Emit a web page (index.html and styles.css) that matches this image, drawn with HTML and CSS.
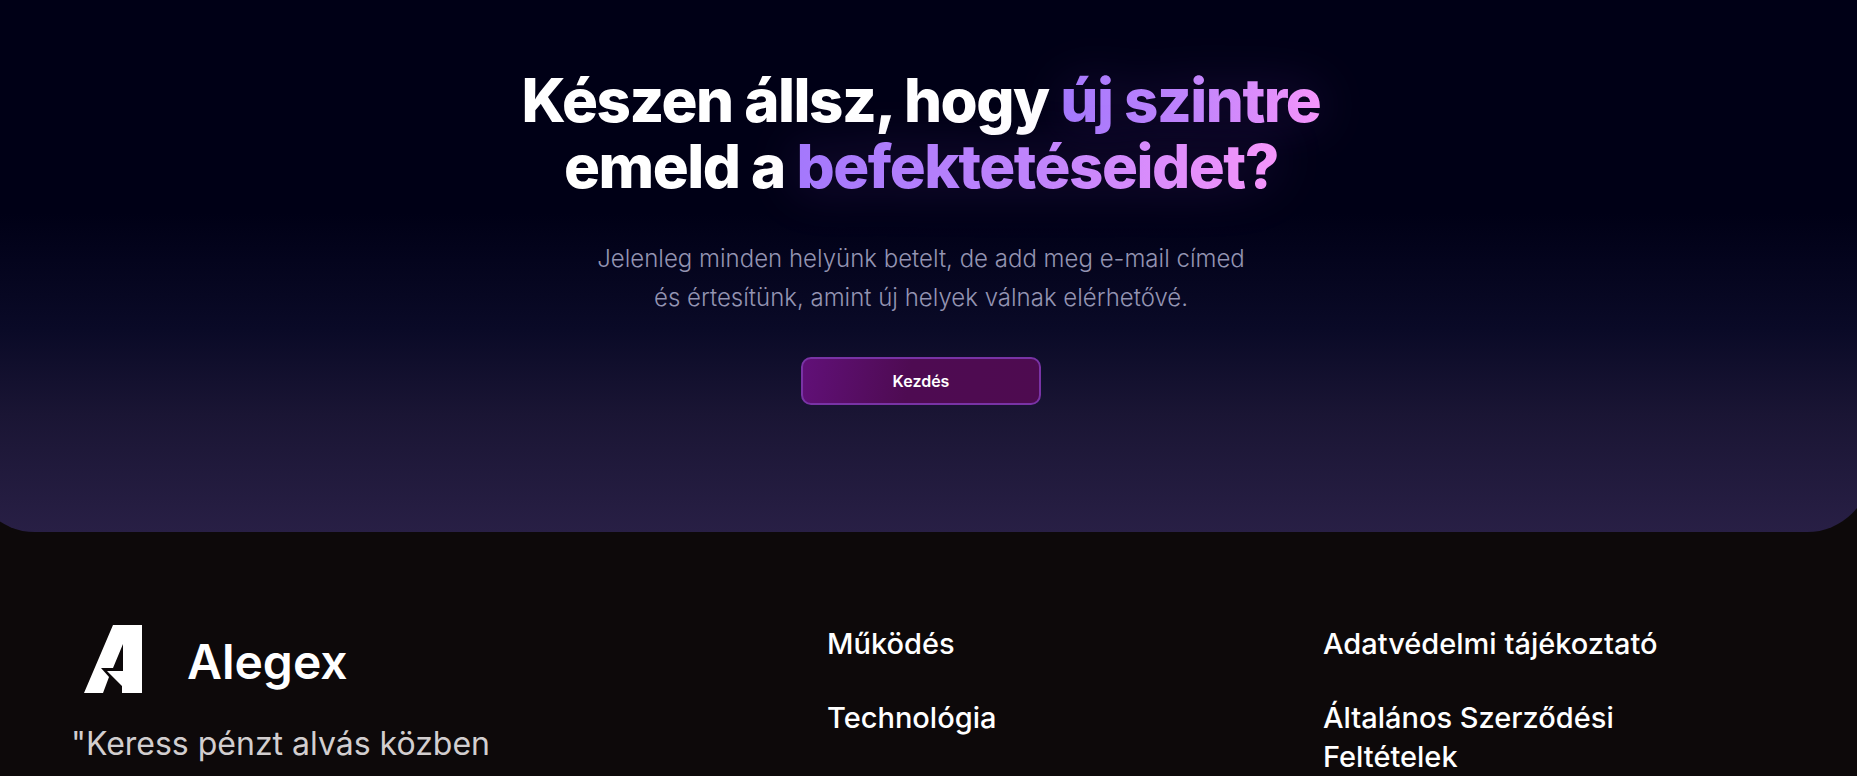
FILE: index.html
```html
<!DOCTYPE html>
<html lang="hu">
<head>
    <meta charset="UTF-8">
    <meta name="viewport" content="width=device-width, initial-scale=1.0">
    <title>Alegex</title>
    <link rel="stylesheet" href="styles.css">
</head>
<body>
<div class="page">
    <section class="cta">
        <h2 class="cta-title">
            Készen állsz, hogy <span class="highlight">új szintre</span><br>
            emeld a <span class="highlight">befektetéseidet?</span>
        </h2>
        <p class="cta-text">
            Jelenleg minden helyünk betelt, de add meg e-mail címed<br>
            és értesítünk, amint új helyek válnak elérhetővé.
        </p>
        <button class="cta-btn" type="button">Kezdés</button>
    </section>

    <footer class="footer">
        <div class="brand">
            <a class="brand-link" href="#">
                <svg class="logo" viewBox="0 0 80 90" aria-hidden="true">
                    <path fill="#fff" d="M38 10H67V78H47V71L32 56H48V29L38 53H26L34 62L28 78H9Z"/>
                </svg>
                <span class="brand-name">Alegex</span>
            </a>
            <p class="tagline">"Keress pénzt alvás közben</p>
        </div>
        <nav class="links">
            <a href="#">Működés</a>
            <a href="#">Technológia</a>
        </nav>
        <nav class="links">
            <a href="#">Adatvédelmi tájékoztató</a>
            <a href="#">Általános Szerződési Feltételek</a>
        </nav>
    </footer>
</div>
</body>
</html>
```
FILE: styles.css
```css
* {
    box-sizing: border-box;
}
body {
    margin: 0;
    background: #0d090a;
    color: #fff;
    font-family: Inter, "Liberation Sans", sans-serif;
    overflow: hidden;
}
.page {
    min-height: 100vh;
}
/* wider than the page, so only part of the round corners shows */
.cta {
    display: flex;
    flex-direction: column;
    align-items: center;
    margin: 0 -14px 0 -29px;
    padding: 67px 0 127px;
    border-radius: 0 0 64px 64px;
    background: linear-gradient(#000016 0, #000016 40%, #0a0a27 62%, #1a1534 78%, #281f45 100%);
    text-align: center;
}
.cta-title {
    margin: 0;
    font-size: 60px;
    font-weight: 800;
    line-height: 66px;
    letter-spacing: -0.025em;
}
.highlight {
    background: linear-gradient(to right, #a478fc, #c084fc, #f595fb);
    -webkit-background-clip: text;
    background-clip: text;
    color: transparent;
    filter: drop-shadow(0 0 25px rgba(168, 85, 247, 0.2));
}
.cta-text {
    margin: 40px 0;
    color: #9494b2;
    font-size: 24px;
    font-weight: 300;
    line-height: 39px;
}
.cta-btn {
    width: 240px;
    height: 48px;
    border: 2px solid #7933a5;
    border-radius: 10px;
    background: linear-gradient(100deg, #611078, #4e0b52 45%, #4e0b50);
    color: #fff;
    font-family: inherit;
    font-size: 16px;
    font-weight: 600;
}
.footer {
    display: grid;
    grid-template-columns: 33fr 20fr 20fr;
    gap: 96px;
    padding: 80px 134px 80px 71px;
}
.brand-link {
    display: flex;
    align-items: center;
    gap: 32px;
    padding: 3px 0 0 4px;
    color: #fff;
    text-decoration: none;
}
.logo {
    width: 80px;
    height: 90px;
}
.brand-name {
    padding-top: 2px;
    font-size: 48px;
    font-weight: 600;
}
.tagline {
    margin: 15px 0 0;
    color: #d2cecf;
    font-size: 32px;
    line-height: 48px;
}
.links {
    display: flex;
    flex-direction: column;
    gap: 35px;
    padding-top: 12px;
}
.links a {
    color: #fff;
    font-size: 29px;
    font-weight: 500;
    line-height: 39px;
    text-decoration: none;
}
```
